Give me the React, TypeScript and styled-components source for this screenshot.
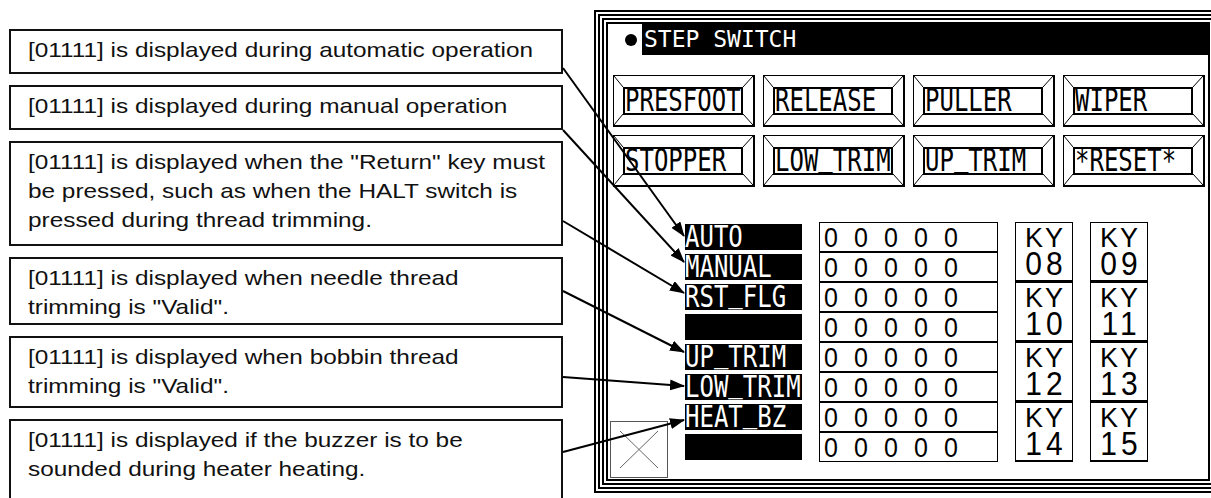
import React from "react";
import styled, { createGlobalStyle } from "styled-components";

const GlobalStyle = createGlobalStyle`
  html, body { margin: 0; padding: 0; background: #fff; }
  body { width: 1211px; height: 498px; overflow: hidden; }
`;

const Page = styled.div`
  position: relative;
  width: 1211px;
  height: 498px;
  overflow: hidden;
  display: flex;
  align-items: flex-start;
  background: #fff;
`;

/* ---------- callouts ---------- */
const Callouts = styled.div`
  display: flex;
  flex-direction: column;
  gap: 11px;
  width: 554px;
  margin: 29px 0 0 9px;
  flex-shrink: 0;
`;

const Callout = styled.div<{ $h: number }>`
  box-sizing: border-box;
  height: ${(p) => p.$h}px;
  border: 2px solid #111;
  padding: 4px 0 0 17px;
  font-family: "Liberation Sans", Arial, sans-serif;
  font-size: 21px;
  line-height: 29px;
  color: #111;
`;

const CalloutLine = styled.span`
  display: block;
  white-space: nowrap;
  transform: scaleX(1.16);
  transform-origin: left center;
`;

/* ---------- panel frame ---------- */
const Panel = styled.div`
  flex-shrink: 0;
  margin: 10px 0 0 31px;
  border: 2px solid #000;
  padding: 2px;
  background: #fff;
`;

const Ring = styled.div`
  border: 2px solid #000;
  padding: 2px;
`;

const Screen = styled.div`
  box-sizing: border-box;
  width: 604px;
  height: 459px;
  border: 2px solid #000;
  display: flex;
  flex-direction: column;
  overflow: hidden;
  background: #fff;
`;

const TitleBar = styled.div`
  display: flex;
  height: 31px;
  flex-shrink: 0;
`;

const TitleMark = styled.div`
  box-sizing: border-box;
  width: 34px;
  display: flex;
  align-items: center;
  justify-content: flex-end;
  padding-right: 5px;
`;

const Dot = styled.span`
  width: 12px;
  height: 12px;
  border-radius: 50%;
  background: #000;
`;

const TitleText = styled.div`
  flex: 1;
  background: #000;
  color: #fff;
  font-family: "DejaVu Sans Mono", monospace;
  font-size: 23px;
  line-height: 1;
  display: flex;
  align-items: center;
  padding-left: 2px;
  white-space: pre;
`;

/* ---------- switch keys ---------- */
const KeyGrid = styled.div`
  display: grid;
  grid-template-columns: repeat(4, 142px);
  grid-auto-rows: 52px;
  gap: 8px;
  margin: 20px 0 0 5px;
  flex-shrink: 0;
`;

const SwitchKey = styled.div`
  position: relative;
  box-sizing: border-box;
  border: 1px solid #000;
  border-right-width: 2px;
  border-bottom-width: 2px;
  padding: 11px 10px 10px 9px;
  display: flex;
`;

const Bevel = styled.svg`
  position: absolute;
  left: 0;
  top: 0;
  width: 100%;
  height: 100%;
  pointer-events: none;
`;

const KeyFace = styled.div`
  position: relative;
  flex: 1;
  border: 2px solid #000;
  display: flex;
  align-items: center;
  overflow: hidden;
  background: #fff;
`;

const LcdText = styled.span<{ $sy: number }>`
  display: inline-block;
  font-family: "DejaVu Sans Mono", monospace;
  font-size: 24px;
  line-height: 1;
  white-space: pre;
  transform: scaleY(${(p) => p.$sy});
`;

const Under = styled.span`
  position: relative;
  top: -4px;
`;

/* ---------- data area ---------- */
const DataArea = styled.div`
  flex: 1;
  display: flex;
  margin-top: 35px;
  min-height: 0;
`;

const SideCol = styled.div`
  box-sizing: border-box;
  width: 77px;
  display: flex;
  flex-direction: column;
  justify-content: flex-end;
  padding: 0 0 1px 2px;
`;

const CancelBox = styled.div`
  box-sizing: border-box;
  width: 58px;
  height: 57px;
  border: 1px solid #555;
  background: #fff;
`;

const CancelMark = styled.svg`
  display: block;
  width: 56px;
  height: 55px;
`;

const DataGrid = styled.div`
  align-self: flex-start;
  display: grid;
  grid-template-columns: 117px 179px 58px 58px;
  grid-template-rows: repeat(8, 30px);
  column-gap: 17px;
`;

const Label = styled.div<{ $row: number }>`
  grid-column: 1;
  grid-row: ${(p) => p.$row};
  height: 26px;
  margin: 2px 0;
  background: #000;
  color: #fff;
  overflow: hidden;
  display: flex;
  align-items: center;
`;

const ValueBox = styled.div<{ $row: number }>`
  grid-column: 2;
  grid-row: ${(p) => p.$row};
  box-sizing: border-box;
  border: 1px solid #000;
  display: flex;
  align-items: center;
  padding-left: 4px;
  background: #fff;
`;

const Digit = styled.span`
  display: inline-block;
  width: 30px;
  font-family: "Liberation Sans", Arial, sans-serif;
  font-size: 25px;
  line-height: 1;
  color: #000;
  transform: scaleY(1.12);
  transform-origin: left center;
`;

const KyBox = styled.div<{ $row: number; $col: number }>`
  grid-column: ${(p) => p.$col};
  grid-row: ${(p) => p.$row} / span 2;
  box-sizing: border-box;
  border: 1px solid #000;
  border-bottom-width: 2px;
  display: flex;
  flex-direction: column;
  align-items: center;
  padding-top: 4px;
  font-family: "Liberation Sans", Arial, sans-serif;
  color: #000;
  background: #fff;
`;

const KyTop = styled.span`
  font-size: 27px;
  line-height: 22px;
  letter-spacing: 2px;
  padding-left: 2px;
`;

const KyNum = styled.span`
  margin-top: 2px;
  font-size: 30px;
  line-height: 26px;
  letter-spacing: 4px;
  padding-left: 4px;
  transform: scaleY(1.1);
`;

/* ---------- overlay arrows ---------- */
const Overlay = styled.svg`
  position: absolute;
  left: 0;
  top: 0;
  width: 1211px;
  height: 498px;
  pointer-events: none;
`;

const callouts: { h: number; lines: string[] }[] = [
  { h: 45, lines: ["[01111] is displayed during automatic operation"] },
  { h: 45, lines: ["[01111] is displayed during manual operation"] },
  {
    h: 105,
    lines: [
      '[01111] is displayed when the "Return" key must',
      "be pressed, such as when the HALT switch is",
      "pressed during thread trimming.",
    ],
  },
  { h: 68, lines: ["[01111] is displayed when needle thread", 'trimming is "Valid".'] },
  { h: 72, lines: ["[01111] is displayed when bobbin thread", 'trimming is "Valid".'] },
  { h: 90, lines: ["[01111] is displayed if the buzzer is to be", "sounded during heater heating."] },
];

const keys = ["PRESFOOT", "RELEASE", "PULLER", "WIPER", "STOPPER", "LOW_TRIM", "UP_TRIM", "*RESET*"];

const labels = ["AUTO", "MANUAL", "RST_FLG", "", "UP_TRIM", "LOW_TRIM", "HEAT_BZ", ""];

const kyPairs = [
  ["08", "09"],
  ["10", "11"],
  ["12", "13"],
  ["14", "15"],
];

const arrows = [
  [563, 68, 684, 236],
  [563, 130, 684, 262],
  [563, 221, 684, 293],
  [563, 291, 684, 352],
  [563, 377, 684, 386],
  [563, 452, 684, 420],
];

function lcd(text: string) {
  const parts = text.split("_");
  return parts.map((p, i) => (
    <React.Fragment key={i}>
      {p}
      {i < parts.length - 1 && <Under>_</Under>}
    </React.Fragment>
  ));
}

export default function App() {
  return (
    <>
      <GlobalStyle />
      <Page>
        <Callouts>
          {callouts.map((c, i) => (
            <Callout key={i} $h={c.h}>
              {c.lines.map((l, j) => (
                <CalloutLine key={j}>{l}</CalloutLine>
              ))}
            </Callout>
          ))}
        </Callouts>

        <Panel>
          <Ring>
            <Ring>
              <Screen>
                <TitleBar>
                  <TitleMark>
                    <Dot />
                  </TitleMark>
                  <TitleText>STEP SWITCH</TitleText>
                </TitleBar>

                <KeyGrid>
                  {keys.map((k) => (
                    <SwitchKey key={k}>
                      <Bevel viewBox="0 0 139 49" preserveAspectRatio="none">
                        <g stroke="#000" strokeWidth="1">
                          <line x1="0" y1="0" x2="9" y2="11" />
                          <line x1="139" y1="0" x2="129" y2="11" />
                          <line x1="0" y1="49" x2="9" y2="38" />
                          <line x1="139" y1="49" x2="129" y2="38" />
                        </g>
                      </Bevel>
                      <KeyFace>
                        <LcdText $sy={1.3}>{lcd(k)}</LcdText>
                      </KeyFace>
                    </SwitchKey>
                  ))}
                </KeyGrid>

                <DataArea>
                  <SideCol>
                    <CancelBox>
                      <CancelMark viewBox="0 0 56 55">
                        <g stroke="#666" strokeWidth="1">
                          <line x1="9" y1="9" x2="47" y2="46" />
                          <line x1="47" y1="9" x2="9" y2="46" />
                        </g>
                      </CancelMark>
                    </CancelBox>
                  </SideCol>

                  <DataGrid>
                    {labels.map((l, i) => (
                      <Label key={"l" + i} $row={i + 1}>
                        <LcdText $sy={1.25}>{lcd(l)}</LcdText>
                      </Label>
                    ))}
                    {labels.map((_, i) => (
                      <ValueBox key={"v" + i} $row={i + 1}>
                        {[0, 1, 2, 3, 4].map((d) => (
                          <Digit key={d}>0</Digit>
                        ))}
                      </ValueBox>
                    ))}
                    {kyPairs.map((pair, i) =>
                      pair.map((n, j) => (
                        <KyBox key={n} $row={i * 2 + 1} $col={3 + j}>
                          <KyTop>KY</KyTop>
                          <KyNum>{n}</KyNum>
                        </KyBox>
                      ))
                    )}
                  </DataGrid>
                </DataArea>
              </Screen>
            </Ring>
          </Ring>
        </Panel>

        <Overlay viewBox="0 0 1211 498">
          <defs>
            <marker
              id="tip"
              markerUnits="userSpaceOnUse"
              markerWidth="15"
              markerHeight="11"
              refX="14"
              refY="5.5"
              orient="auto"
            >
              <path d="M0,0 L15,5.5 L0,11 Z" fill="#000" />
            </marker>
          </defs>
          {arrows.map(([x1, y1, x2, y2], i) => (
            <line
              key={i}
              x1={x1}
              y1={y1}
              x2={x2}
              y2={y2}
              stroke="#000"
              strokeWidth="2"
              markerEnd="url(#tip)"
            />
          ))}
        </Overlay>
      </Page>
    </>
  );
}
